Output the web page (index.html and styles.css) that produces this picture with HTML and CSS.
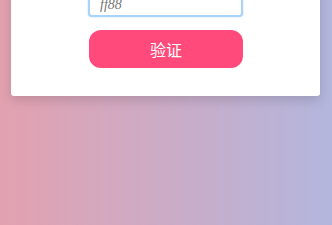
FILE: index.html
```html
<!DOCTYPE html>
<html lang="zh">

<head>
  <meta charset="UTF-8" />
  <meta name="viewport" content="width=device-width, initial-scale=1.0" />
  <title>验证</title>
  <link rel="stylesheet" href="styles.css">
</head>

<body>

  <div class="card">
    <input class="code" type="text" value="ff88" autofocus>
    <button class="btn">验证</button>
  </div>

  <script>
    const input = document.querySelector('.code');
    input.focus();
    input.setSelectionRange(4, 4);
  </script>

</body>

</html>
```

FILE: styles.css
```css
html,
body {
  height: 100%;
}

body {
  margin: 0;
  padding: 0;
  font-family: "Noto Sans CJK SC", "Liberation Sans", sans-serif;
  background: linear-gradient(to right, #e3a1b0, #b3b6dd);
  overflow: hidden;
}

.card {
  margin: -60px 12px 0 11px;
  padding: 53px 0 28px;
  background: #ffffff;
  border-radius: 3px;
  box-shadow: 0 4px 12px rgba(0, 0, 0, 0.15);
  display: flex;
  flex-direction: column;
  align-items: center;
  gap: 13px;
}

.code {
  box-sizing: border-box;
  width: 155px;
  height: 24px;
  padding: 0 10px;
  border: 2px solid #a9d3f7;
  border-radius: 4px;
  outline: none;
  box-shadow: 0 0 2px rgba(80, 160, 240, 0.4);
  font-family: "Liberation Serif", serif;
  font-style: italic;
  font-size: 14px;
  color: #777;
  caret-color: #3b7ddd;
}

.btn {
  width: 154px;
  height: 38px;
  margin-left: 1px;
  border: none;
  border-radius: 12px;
  background: #ff4a7b;
  color: #ffffff;
  font-family: "Noto Sans CJK SC", sans-serif;
  font-size: 16px;
}
```
